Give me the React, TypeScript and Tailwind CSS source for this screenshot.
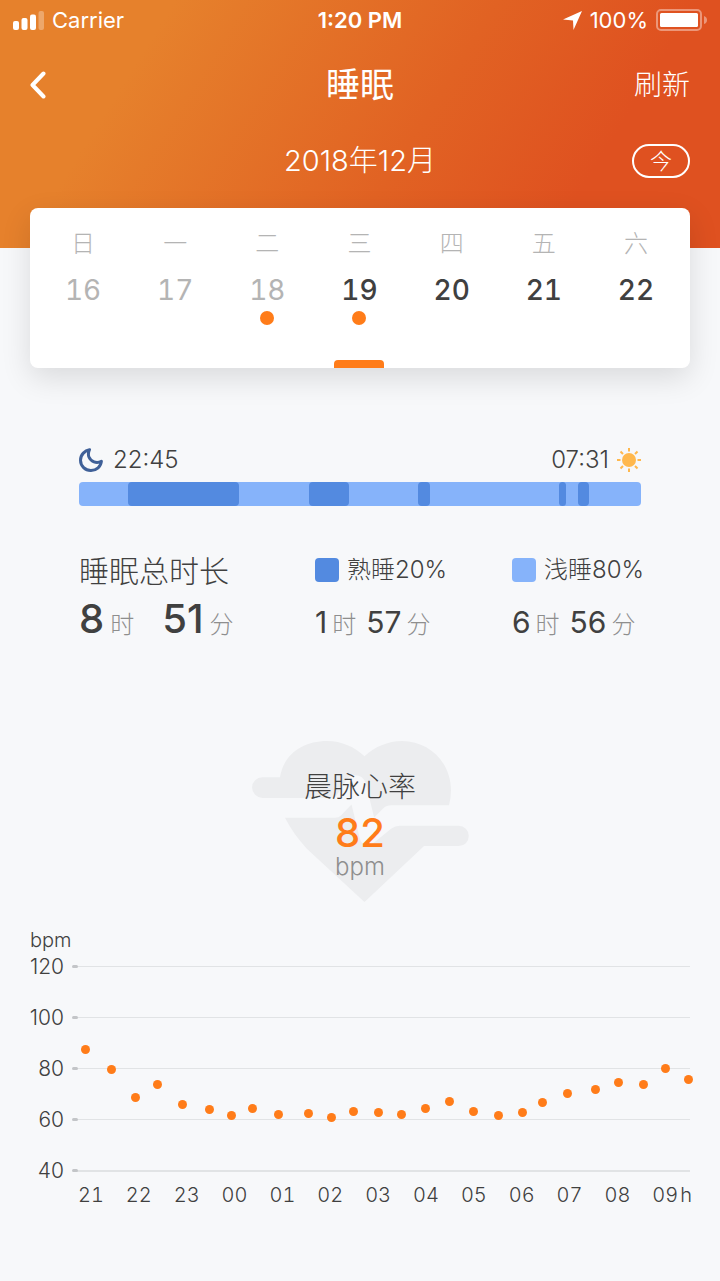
const FONT = "font-['Inter','Noto_Sans_CJK_SC',sans-serif]";

const DAYS = [
  { weekday: '日', date: 16, past: true, record: false },
  { weekday: '一', date: 17, past: true, record: false },
  { weekday: '二', date: 18, past: true, record: true },
  { weekday: '三', date: 19, past: false, record: true },
  { weekday: '四', date: 20, past: false, record: false },
  { weekday: '五', date: 21, past: false, record: false },
  { weekday: '六', date: 22, past: false, record: false },
];

const SELECTED = 19;

// alternating phases of the night, starting and ending with light sleep
const PHASES = [
  { deep: false, span: 49 },
  { deep: true, span: 111 },
  { deep: false, span: 70 },
  { deep: true, span: 40 },
  { deep: false, span: 69 },
  { deep: true, span: 12 },
  { deep: false, span: 129 },
  { deep: true, span: 7 },
  { deep: false, span: 12 },
  { deep: true, span: 11 },
  { deep: false, span: 52 },
];

const LEVELS = [120, 100, 80, 60, 40];
const HOURS = ['21', '22', '23', '00', '01', '02', '03', '04', '05', '06', '07', '08', '09'];

// x along the plot, y down from the 120 bpm line
const POINTS = [
  [13, 83], [39, 103], [63, 131], [85, 118], [110, 138], [137, 143], [159, 149], [180, 142],
  [206, 148], [236, 147], [259, 151], [281, 145], [306, 146], [329, 148], [353, 142], [377, 135],
  [401, 145], [426, 149], [450, 146], [470, 136], [495, 127], [523, 123], [546, 116], [571, 118],
  [593, 102], [616, 113],
];

function StatusBar() {
  return (
    <div className="grid h-10 grid-cols-3 items-center px-[13px] text-[22px] leading-7">
      <div className="flex items-center gap-2">
        <svg width="31" height="19" viewBox="0 0 31 19" fill="currentColor" aria-hidden="true">
          <rect x="0" y="10" width="6" height="9" rx="2" />
          <rect x="8.5" y="7" width="6" height="12" rx="2" />
          <rect x="17" y="3.5" width="6" height="15.5" rx="2" />
          <rect x="25.5" y="0" width="5.5" height="19" rx="2" opacity=".3" />
        </svg>
        <span>Carrier</span>
      </div>
      <span className="text-center font-semibold">1:20 PM</span>
      <div className="flex items-center justify-end gap-2">
        <svg width="19" height="19" viewBox="0 0 19 19" fill="currentColor" aria-hidden="true">
          <path d="M19 0 10.5 19 10 9.5 0 8.5Z" />
        </svg>
        <span>100%</span>
        <svg width="51" height="22" viewBox="0 0 51 22" fill="none" aria-hidden="true">
          <rect x="1" y="1" width="44" height="20" rx="4" stroke="white" strokeOpacity=".4" strokeWidth="2" />
          <rect x="4" y="4" width="38" height="14" rx="1.5" fill="white" />
          <path d="M48 7Q51 8 51 11T48 15Z" fill="white" opacity=".4" />
        </svg>
      </div>
    </div>
  );
}

function WeekCard() {
  return (
    <div className="mx-[30px] -mt-10 grid grid-cols-7 rounded-lg bg-white pl-[7px] pr-2 shadow-[0_10px_30px_rgba(0,0,0,0.12)]">
      {DAYS.map(({ weekday, date, past, record }) => (
        <button key={date} type="button" className="flex h-40 flex-col items-center pt-5">
          <span className="text-[24px] font-light leading-8 text-[#b4b4b4]">{weekday}</span>
          <span className={`mt-3 text-[28px] leading-9 tabular-nums ${past ? 'font-normal text-[#b4b4b4]' : 'font-medium text-[#404040]'}`}>
            {date}
          </span>
          {record && <span className="mt-[3px] size-[14px] rounded-full bg-[#ff7c19]" />}
          {date === SELECTED && <span className="mt-auto h-2 w-[50px] rounded-t bg-[#ff7c19]" />}
        </button>
      ))}
    </div>
  );
}

function Unit({ children }: { children: string }) {
  return <span className="text-[24px] font-light text-[#8e8e8e]">{children}</span>;
}

function Duration({ hours, minutes }: { hours: number; minutes: number }) {
  return (
    <div className="mt-[14px] flex items-baseline gap-[5px] text-[30px] leading-10">
      <span>{hours}</span>
      <Unit>时</Unit>
      <span className="ml-[5px]">{minutes}</span>
      <Unit>分</Unit>
    </div>
  );
}

function SleepSummary() {
  return (
    <section className="mx-[79px] mt-[77px]">
      <div className="flex items-center justify-between text-[24px] font-light leading-[30px]">
        <span className="flex items-center gap-[10px]">
          <svg width="24" height="24" viewBox="0 0 24 24" fill="none" stroke="#3f6098" strokeWidth="3" strokeLinejoin="round" aria-hidden="true">
            <path d="M10.5 1.7C6 2.5 1.5 6.5 1.5 12.3A10.3 10.3 0 0 0 12 22.5C17.5 22.5 22 18.5 22.4 13.2 20 14.5 17.5 14.8 15 13.8 10 11.8 8 7 10.5 1.7Z" />
          </svg>
          22:45
        </span>
        <span className="flex items-center gap-2">
          07:31
          <svg width="24" height="24" viewBox="0 0 24 24" stroke="#ffb84d" strokeWidth="2" aria-hidden="true">
            <circle cx="12" cy="12" r="7" fill="#ffb84d" stroke="none" />
            <path d="M12 0v3.5M12 20.5V24M0 12h3.5M20.5 12H24M3.5 3.5 6 6M18 18l2.5 2.5M3.5 20.5 6 18M18 6l2.5-2.5" />
          </svg>
        </span>
      </div>
      <div className="mt-[7px] flex h-6 overflow-hidden rounded bg-[#86b3fa]">
        {PHASES.map(({ deep, span }, i) => (
          <span key={i} className={deep ? 'rounded bg-[#538ae0]' : ''} style={{ flex: `${span} 0 0px` }} />
        ))}
      </div>

      <div className="mt-[46px] grid grid-cols-[236fr_197fr_129fr] whitespace-nowrap">
        <div>
          <h2 className="text-[30px] font-light leading-[38px]">睡眠总时长</h2>
          <div className="mt-2 flex items-baseline gap-[6px] text-[40px] font-medium leading-[42px]">
            <span>8</span>
            <Unit>时</Unit>
            <span className="ml-[22px]">51</span>
            <Unit>分</Unit>
          </div>
        </div>
        <div>
          <h3 className="flex h-9 items-center gap-2 text-[24px] font-light">
            <span className="size-6 shrink-0 rounded bg-[#538ae0]" />
            熟睡20%
          </h3>
          <Duration hours={1} minutes={57} />
        </div>
        <div className="min-w-0">
          <h3 className="flex h-9 items-center gap-2 text-[24px] font-light">
            <span className="size-6 shrink-0 rounded bg-[#86b3fa]" />
            浅睡80%
          </h3>
          <Duration hours={6} minutes={56} />
        </div>
      </div>
    </section>
  );
}

function MorningPulse() {
  return (
    <section className="relative mt-[95px] flex h-[161px] flex-col items-center pt-[26px]">
      <svg
        className="absolute top-0 left-1/2 -ml-[108px] h-[161px] w-[217px]"
        viewBox="36 62 652 484"
        fill="#ecedef"
        aria-hidden="true"
      >
        <path d="M67 171H120C130 105 185 62 262 62 305 62 345 80 374 108 403 80 445 62 487 62 570 62 634 128 634 210Q634 235 628 255H455Q440 255 430 265L403 292 378 190Q370 165 346 165 328 165 318 182L290 226Q284 233 270 233H67A31 31 0 0 1 67 171Z" />
        <path d="M135 293H285Q297 293 304 285L335 253 360 355Q364 372 382 374 396 374 406 365L455 325Q466 317 480 317H657A30 30 0 0 1 657 378H553L374 546 200 385Q160 342 135 293Z" />
      </svg>
      <h2 className="relative text-[28px] font-light leading-10">晨脉心率</h2>
      <p className="relative mt-1 text-[40px] font-medium leading-[44px] text-[#ff7c19]">82</p>
      <p className="relative text-[24px] font-light leading-6 text-[#8e8e8e]">bpm</p>
    </section>
  );
}

function HeartRateChart() {
  return (
    <section className="ml-[28px] mr-[30px] mt-[26px] pb-[70px] text-[20px] font-light leading-6">
      <p className="pl-[2px]">bpm</p>
      <div className="flex">
        <div className="flex w-9 flex-col gap-[27px] pt-[3px] text-right text-[21px] leading-6">
          {LEVELS.map((level) => (
            <span key={level}>{level}</span>
          ))}
        </div>
        <div className="ml-2 flex-1 pt-[14px]">
          <svg className="w-full overflow-visible" height="205" viewBox="0 0 618 205" preserveAspectRatio="none" aria-hidden="true">
            {LEVELS.map((level, i) => (
              <g key={level}>
                <rect x="4" y={i * 51} width="614" height={level === 40 ? 2 : 1} fill="#e1e3e5" />
                <rect x="0" y={i * 51 - 1} width="6" height="3" rx="1.5" fill="#c3c5c8" />
              </g>
            ))}
            {POINTS.map(([x, y]) => (
              <circle key={x} cx={x + 0.5} cy={y + 0.5} r="4.5" fill="#ff7c19" />
            ))}
          </svg>
        </div>
      </div>
      <div className="ml-[50px] -mr-[2px] flex">
        <div className="flex flex-1 justify-between tabular-nums">
          {HOURS.map((hour) => (
            <span key={hour}>{hour}</span>
          ))}
        </div>
        <span className="ml-[2px]">h</span>
      </div>
    </section>
  );
}

export default function App() {
  return (
    <div className={`min-h-screen bg-[#f7f8fa] text-[#404040] ${FONT}`}>
      <header className="bg-[linear-gradient(122deg,#e6812c_20%,#e16223_57%,#df5120_80%)] pb-[69px] text-white">
        <StatusBar />
        <nav className="mt-[19px] grid h-12 grid-cols-3 items-center px-[30px]">
          <button type="button" aria-label="返回" className="justify-self-start">
            <svg width="16" height="28" viewBox="0 0 16 28" fill="none" stroke="currentColor" strokeWidth="4" strokeLinecap="round" strokeLinejoin="round" aria-hidden="true">
              <path d="M13.5 2.5 2.5 14l11 11.5" />
            </svg>
          </button>
          <h1 className="text-center text-[34px] font-normal">睡眠</h1>
          <button type="button" className="justify-self-end text-[28px] font-light">刷新</button>
        </nav>
        <div className="mt-8 grid h-10 grid-cols-3 items-center px-[30px]">
          <p className="col-start-2 text-center text-[29px] font-light">2018年12月</p>
          <button type="button" className="h-[34px] w-[58px] justify-self-end rounded-full border-2 border-white text-[22px] font-light leading-7">
            今
          </button>
        </div>
      </header>
      <main>
        <WeekCard />
        <SleepSummary />
        <MorningPulse />
        <HeartRateChart />
      </main>
    </div>
  );
}
